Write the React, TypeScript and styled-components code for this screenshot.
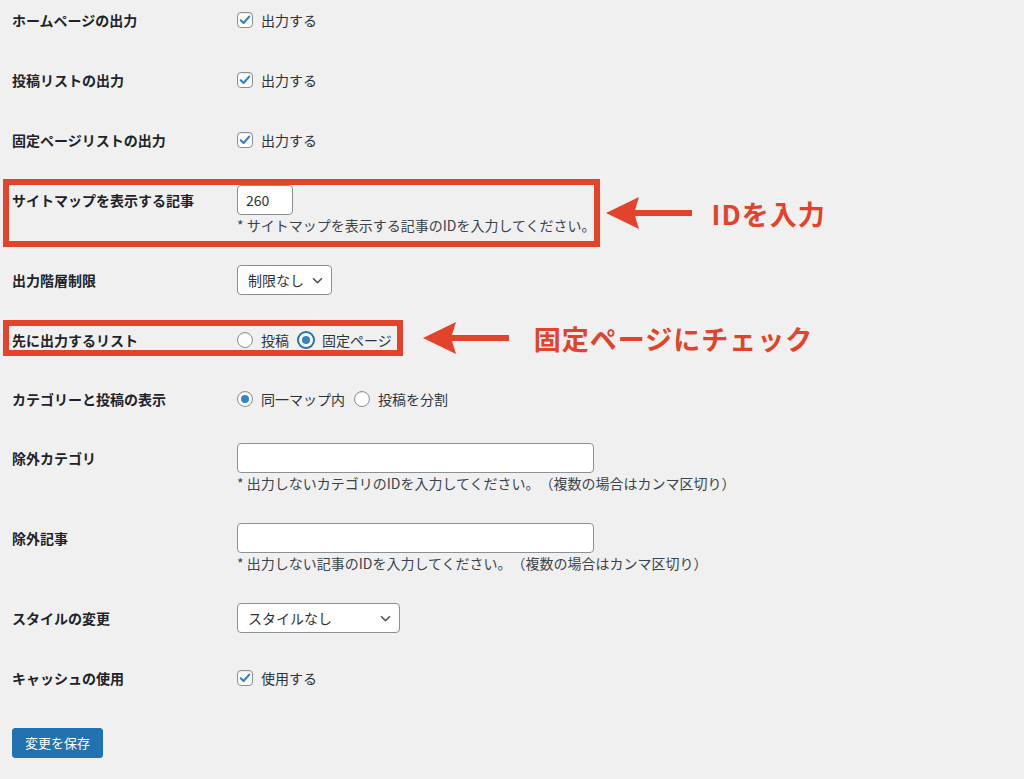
import React from 'react';
import styled, { createGlobalStyle, css } from 'styled-components';

const RED = '#e2432a';

const GlobalStyle = createGlobalStyle`
  html, body {
    margin: 0;
    padding: 0;
    background: #f0f0f1;
  }
  body {
    font-family: "Noto Sans CJK JP", "Noto Sans", sans-serif;
    color: #1d2327;
    text-spacing-trim: space-all;
  }
`;

const Page = styled.main`
  min-height: 779px;
  padding: 0 12px;
  box-sizing: border-box;
  background: #f0f0f1;
`;

const Form = styled.div`
  display: flex;
  flex-direction: column;
  align-items: flex-start;
  gap: 25px;
`;

const Row = styled.div<{ $frame?: string }>`
  position: relative;
  display: flex;
  align-items: flex-start;

  ${p => p.$frame && css`
    &::before {
      content: '';
      position: absolute;
      inset: ${p.$frame};
      border: 6px solid ${RED};
      pointer-events: none;
    }
  `}
`;

const Label = styled.div`
  width: 225px;
  flex-shrink: 0;
  box-sizing: border-box;
  padding-top: 10px;
  font-size: 14px;
  line-height: 20px;
  font-weight: 700;
  color: #1d2327;
`;

const Field = styled.div<{ $pad?: number }>`
  display: flex;
  flex-direction: column;
  align-items: flex-start;
  padding-top: ${p => p.$pad ?? 5}px;
`;

const Options = styled.div<{ $h?: number }>`
  display: flex;
  align-items: center;
  gap: 9px;
  height: ${p => p.$h ?? 30}px;
  font-size: 14px;
  color: #2c3338;
`;

const Option = styled.label`
  display: flex;
  align-items: center;
  gap: 8px;
  white-space: nowrap;
`;

const CheckBox = styled.span`
  width: 16px;
  height: 16px;
  box-sizing: border-box;
  border: 1px solid #8c8f94;
  border-radius: 4px;
  background: #fff;
  box-shadow: inset 0 1px 2px rgba(0, 0, 0, 0.1);
  display: grid;
  place-items: center;
`;

const Radio = styled.span<{ $checked?: boolean; $focus?: boolean }>`
  position: relative;
  width: 16px;
  height: 16px;
  box-sizing: border-box;
  border: 1px solid ${p => (p.$focus ? '#2271b1' : '#8c8f94')};
  border-radius: 50%;
  background: #fff;
  box-shadow: ${p => (p.$focus ? '0 0 0 1px #2271b1' : 'inset 0 1px 2px rgba(0,0,0,0.1)')};

  ${p => p.$checked && css`
    &::before {
      content: '';
      position: absolute;
      left: 50%;
      top: 50%;
      width: 8px;
      height: 8px;
      margin: -4px 0 0 -4px;
      border-radius: 50%;
      background: #3582c4;
    }
  `}
`;

const TextInput = styled.input<{ $w: number }>`
  width: ${p => p.$w}px;
  height: 30px;
  box-sizing: border-box;
  margin: 0;
  padding: 0 8px;
  border: 1px solid #8c8f94;
  border-radius: 4px;
  background: #fff;
  font: inherit;
  font-size: 14px;
  color: #2c3338;
  outline: none;
`;

const Description = styled.p`
  margin: 0;
  font-size: 14px;
  line-height: 20px;
  color: #3c434a;
  white-space: nowrap;
  text-spacing-trim: space-all;
`;

const Select = styled.div<{ $w?: number }>`
  display: flex;
  align-items: center;
  justify-content: space-between;
  gap: 8px;
  ${p => p.$w && css`width: ${p.$w}px;`}
  height: 30px;
  box-sizing: border-box;
  padding: 0 8px 0 10px;
  border: 1px solid #8c8f94;
  border-radius: 4px;
  background: #fff;
  font-size: 14px;
  color: #2c3338;
  white-space: nowrap;
`;

const Callout = styled.div<{ $gap: number; $y: number; $textGap: number }>`
  position: absolute;
  left: calc(100% + ${p => p.$gap}px);
  top: ${p => p.$y}px;
  transform: translateY(-50%);
  display: flex;
  align-items: center;
  gap: ${p => p.$textGap}px;
  white-space: nowrap;
`;

const CalloutText = styled.span`
  font-size: 27px;
  line-height: 1;
  font-weight: 700;
  letter-spacing: 1px;
  color: ${RED};
`;

const SubmitBar = styled.div`
  padding-top: 35px;
`;

const Button = styled.button`
  height: 30px;
  padding: 0 12px;
  border: 1px solid #2271b1;
  border-radius: 3px;
  background: #2271b1;
  color: #fff;
  font: inherit;
  font-size: 13px;
  line-height: 28px;
  cursor: pointer;
`;

const Check = () => (
  <svg width="12" height="12" viewBox="0 0 12 12">
    <path d="M1.8 6.3 L4.6 9 L10.2 2.6" fill="none" stroke="#3582c4" strokeWidth="2.2" strokeLinecap="round" strokeLinejoin="round" />
  </svg>
);

const Chevron = () => (
  <svg width="11" height="7" viewBox="0 0 11 7">
    <path d="M1 1.2 L5.5 5.6 L10 1.2" fill="none" stroke="#50575e" strokeWidth="1.5" />
  </svg>
);

const Arrow = () => (
  <svg width="86" height="34" viewBox="0 0 86 34">
    <path d="M0 17 L33 1 L29 14 L86 14 L86 20 L29 20 L33 33 Z" fill={RED} />
  </svg>
);

const CheckRow = ({ label, text }: { label: string; text: string }) => (
  <Row>
    <Label>{label}</Label>
    <Field>
      <Options>
        <Option>
          <CheckBox><Check /></CheckBox>
          {text}
        </Option>
      </Options>
    </Field>
  </Row>
);

const App = () => {
  return (
    <Page>
      <GlobalStyle />
      <Form>
        <CheckRow label="ホームページの出力" text="出力する" />
        <CheckRow label="投稿リストの出力" text="出力する" />
        <CheckRow label="固定ページリストの出力" text="出力する" />

        <Row $frame="-1px -4px -12px -9px">
          <Label>サイトマップを表示する記事</Label>
          <Field>
            <TextInput $w={56} defaultValue="260" readOnly />
            <Description>* サイトマップを表示する記事のIDを入力してください。</Description>
          </Field>
          <Callout $gap={10} $y={33} $textGap={20}>
            <Arrow />
            <CalloutText>IDを入力</CalloutText>
          </Callout>
        </Row>

        <Row>
          <Label>出力階層制限</Label>
          <Field>
            <Select>
              制限なし
              <Chevron />
            </Select>
          </Field>
        </Row>

        <Row $frame="0 -11px -2px -9px">
          <Label>先に出力するリスト</Label>
          <Field $pad={6}>
            <Options $h={28}>
              <Option><Radio />投稿</Option>
              <Option><Radio $checked $focus />固定ページ</Option>
            </Options>
          </Field>
          <Callout $gap={31} $y={18} $textGap={25}>
            <Arrow />
            <CalloutText>固定ページにチェック</CalloutText>
          </Callout>
        </Row>

        <Row>
          <Label>カテゴリーと投稿の表示</Label>
          <Field $pad={6}>
            <Options $h={28}>
              <Option><Radio $checked />同一マップ内</Option>
              <Option><Radio />投稿を分割</Option>
            </Options>
          </Field>
        </Row>

        <Row>
          <Label>除外カテゴリ</Label>
          <Field>
            <TextInput $w={357} readOnly />
            <Description>* 出力しないカテゴリのIDを入力してください。（複数の場合はカンマ区切り）</Description>
          </Field>
        </Row>

        <Row>
          <Label>除外記事</Label>
          <Field>
            <TextInput $w={357} readOnly />
            <Description>* 出力しない記事のIDを入力してください。（複数の場合はカンマ区切り）</Description>
          </Field>
        </Row>

        <Row>
          <Label>スタイルの変更</Label>
          <Field>
            <Select $w={163}>
              スタイルなし
              <Chevron />
            </Select>
          </Field>
        </Row>

        <CheckRow label="キャッシュの使用" text="使用する" />
      </Form>

      <SubmitBar>
        <Button type="button">変更を保存</Button>
      </SubmitBar>
    </Page>
  );
};

export default App;
